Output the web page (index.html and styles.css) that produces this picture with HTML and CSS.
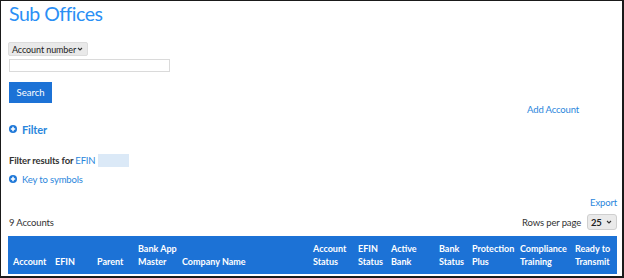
FILE: index.html
```html
<!DOCTYPE html>
<html>
<head>
<title>Sub Offices</title>
<link rel="stylesheet" href="styles.css">
</head>
<body>
<div class="page">
  <h1 class="title">Sub Offices</h1>

  <div class="search">
    <div class="selectbox"><span>Account number</span><svg class="chev" width="6" height="4" viewBox="0 0 6 4"><path d="M1 1l2 2 2-2" fill="none" stroke="#333" stroke-width="1.1"/></svg></div>
    <input type="text" class="searchinput">
    <button type="button" class="searchbtn">Search</button>
  </div>

  <div class="addrow"><a class="link">Add Account</a></div>

  <div class="filter">
    <svg class="plus" width="8" height="8" viewBox="0 0 8 8"><circle cx="4" cy="4" r="4" fill="#1f78d8"/><path d="M4 1.8v4.4M1.8 4h4.4" stroke="#fff" stroke-width="1.5"/></svg>
    <span>Filter</span>
  </div>

  <div class="results">Filter results for <a class="link">EFIN</a><span class="blur"></span></div>

  <div class="keyrow">
    <svg class="plus" width="8" height="8" viewBox="0 0 8 8"><circle cx="4" cy="4" r="4" fill="#1f78d8"/><path d="M4 1.8v4.4M1.8 4h4.4" stroke="#fff" stroke-width="1.5"/></svg>
    <a class="link">Key to symbols</a>
  </div>

  <div class="exportrow"><a class="link">Export</a></div>

  <div class="countrow">
    <span>9 Accounts</span>
    <span class="rows">Rows per page <span class="smallselect"><b>25</b><svg class="chev" width="6" height="4" viewBox="0 0 6 4"><path d="M1 1l2 2 2-2" fill="none" stroke="#333" stroke-width="1.1"/></svg></span></span>
  </div>

  <table class="grid">
    <colgroup>
      <col style="width:42px"><col style="width:42px"><col style="width:41px"><col style="width:44px">
      <col style="width:131px"><col style="width:45px"><col style="width:33px"><col style="width:48px">
      <col style="width:33px"><col style="width:48px"><col style="width:55px"><col style="width:47px">
    </colgroup>
    <tr>
      <th>Account</th>
      <th>EFIN</th>
      <th>Parent</th>
      <th>Bank App<br>Master</th>
      <th>Company Name</th>
      <th>Account<br>Status</th>
      <th>EFIN<br>Status</th>
      <th>Active<br>Bank</th>
      <th>Bank<br>Status</th>
      <th>Protection<br>Plus</th>
      <th>Compliance<br>Training</th>
      <th>Ready to<br>Transmit</th>
    </tr>
  </table>
</div>
</body>
</html>
```

FILE: styles.css
```css
html, body {
    margin: 0;
    padding: 0;
    background: #fff;
}

.page {
    box-sizing: border-box;
    width: 624px;
    height: 278px;
    overflow: hidden;
    border-style: solid;
    border-color: #1a1a1a;
    border-width: 1px 2px 2px 1px;
    padding: 0 5px 0 7px;
    font-family: "Lato", "Open Sans", sans-serif;
    font-size: 9.5px;
    letter-spacing: -0.15px;
    color: #333;
}

.link {
    color: #2a86dc;
    cursor: pointer;
}

.title {
    margin: 0;
    padding-left: 1px;
    height: 33px;
    font-size: 19.5px;
    font-weight: normal;
    letter-spacing: -0.5px;
    color: #2a8ff5;
    line-height: 26px;
}

.search {
    display: flex;
    flex-direction: column;
    align-items: flex-start;
    padding-top: 8px;
}

.selectbox {
    box-sizing: border-box;
    display: flex;
    align-items: center;
    justify-content: space-between;
    width: 80px;
    background: #e9e9e9;
    border: 1px solid #dcdcdc;
    border-radius: 2px;
    padding: 0 4px 0 3px;
    height: 14px;
    font-size: 9px;
    letter-spacing: -0.1px;
    white-space: nowrap;
    color: #222;
}

.chev {
    flex: none;
}

.searchinput {
    box-sizing: border-box;
    margin: 3px 0 0 1px;
    width: 161px;
    height: 13px;
    border: 1px solid #dadada;
    padding: 0;
}

.searchbtn {
    margin: 10px 0 0 1px;
    width: 43px;
    height: 21px;
    border: none;
    background: #1c72d6;
    color: #fff;
    font-family: "Lato", "Open Sans", sans-serif;
    font-size: 9.5px;
    padding: 0;
}

.addrow {
    display: flex;
    justify-content: flex-end;
    padding-right: 38px;
    height: 14px;
    line-height: 14px;
}

.filter {
    display: flex;
    align-items: center;
    gap: 5px;
    margin-top: 4px;
    padding-left: 1px;
    height: 16px;
    font-size: 11px;
    font-weight: bold;
    color: #2a86dc;
}

.plus {
    flex: none;
}

.results {
    margin-top: 17px;
    padding-left: 1px;
    height: 14px;
    line-height: 14px;
    font-weight: bold;
    color: #333;
}

.results .link {
    font-weight: normal;
}

.blur {
    display: inline-block;
    margin-left: 3px;
    width: 31px;
    height: 13px;
    vertical-align: -3px;
    background: #dbe9f7;
}

.keyrow {
    display: flex;
    align-items: center;
    gap: 5px;
    margin-top: 4px;
    padding-left: 1px;
    height: 14px;
}

.exportrow {
    display: flex;
    justify-content: flex-end;
    margin-top: 10px;
    height: 14px;
    line-height: 14px;
}

.countrow {
    display: flex;
    justify-content: space-between;
    align-items: center;
    margin-top: 4px;
    padding-left: 1px;
    height: 16px;
}

.rows {
    display: flex;
    align-items: center;
    gap: 6px;
}

.smallselect {
    box-sizing: border-box;
    display: flex;
    align-items: center;
    justify-content: space-between;
    width: 30px;
    height: 16px;
    background: #eaeaea;
    border: 1px solid #cfcfcf;
    border-radius: 3px;
    padding: 0 4px 0 3px;
    color: #222;
}

.grid {
    margin-top: 6px;
    width: 609px;
    table-layout: fixed;
    border-collapse: collapse;
    background: #1c72d6;
    color: #fff;
}

.grid th {
    text-align: left;
    vertical-align: bottom;
    font-size: 9px;
    font-weight: bold;
    letter-spacing: 0;
    line-height: 13px;
    padding: 6px 0 6px 5px;
    height: 26px;
    white-space: nowrap;
}
```
